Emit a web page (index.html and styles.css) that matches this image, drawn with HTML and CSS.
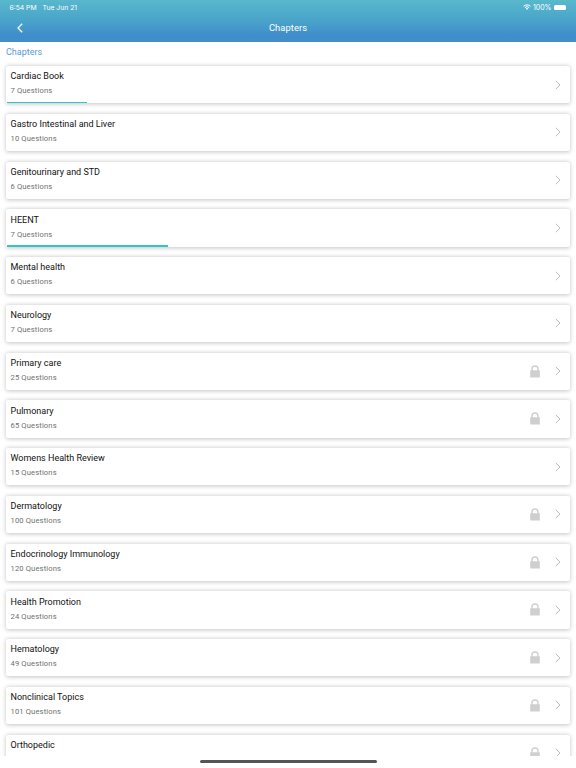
FILE: index.html
```html
<!DOCTYPE html>
<html lang="en">
<head>
    <meta charset="UTF-8">
    <meta name="viewport" content="width=device-width, initial-scale=1.0">
    <title>Chapters</title>
    <link rel="stylesheet" href="styles.css">
</head>
<body>
    <!-- Shared icons -->
    <svg class="icon-defs">
        <symbol id="chevron" viewBox="0 0 6 10">
            <path d="M0.8 0.9 L5 5 L0.8 9.1" fill="none" stroke="currentColor" stroke-width="0.9"/>
        </symbol>
        <symbol id="lock" viewBox="0 0 10 13">
            <path d="M2 6.5 V4 a3 3 0 0 1 6 0 V6.5" fill="none" stroke="currentColor" stroke-width="1.4"/>
            <rect x="0.2" y="5.2" width="9.6" height="7.4" rx="0.4" fill="currentColor"/>
        </symbol>
    </svg>

    <header class="header">
        <div class="status-bar">
            <span class="time">6:54 PM</span>
            <span class="date">Tue Jun 21</span>
            <svg class="wifi" viewBox="0 0 8 6">
                <path d="M0.5 2.3 a5 5 0 0 1 7 0 M1.8 3.7 a3.1 3.1 0 0 1 4.4 0" fill="none" stroke="#fff" stroke-width="1"/>
                <path d="M2.8 4.6 a1.7 1.7 0 0 1 2.4 0 L4 5.9 Z" fill="#fff"/>
            </svg>
            <span class="percent">100%</span>
            <span class="battery"></span>
        </div>
        <div class="nav-bar">
            <svg class="back" viewBox="0 0 6 10"><path d="M5.2 0.8 L1 5 L5.2 9.2" fill="none" stroke="#fff" stroke-width="1.3"/></svg>
            <h1>Chapters</h1>
        </div>
    </header>

    <h2 class="section-title">Chapters</h2>

    <main class="list">
        <div class="card">
            <div class="info"><h3>Cardiac Book</h3><p>7 Questions</p></div>
            <svg class="chevron"><use href="#chevron"/></svg>
            <div class="progress" style="width: 14.1%"></div>
        </div>
        <div class="card">
            <div class="info"><h3>Gastro Intestinal and Liver</h3><p>10 Questions</p></div>
            <svg class="chevron"><use href="#chevron"/></svg>
        </div>
        <div class="card">
            <div class="info"><h3>Genitourinary and STD</h3><p>6 Questions</p></div>
            <svg class="chevron"><use href="#chevron"/></svg>
        </div>
        <div class="card">
            <div class="info"><h3>HEENT</h3><p>7 Questions</p></div>
            <svg class="chevron"><use href="#chevron"/></svg>
            <div class="progress" style="width: 28.5%"></div>
        </div>
        <div class="card">
            <div class="info"><h3>Mental health</h3><p>6 Questions</p></div>
            <svg class="chevron"><use href="#chevron"/></svg>
        </div>
        <div class="card">
            <div class="info"><h3>Neurology</h3><p>7 Questions</p></div>
            <svg class="chevron"><use href="#chevron"/></svg>
        </div>
        <div class="card">
            <div class="info"><h3>Primary care</h3><p>25 Questions</p></div>
            <svg class="lock"><use href="#lock"/></svg>
            <svg class="chevron"><use href="#chevron"/></svg>
        </div>
        <div class="card">
            <div class="info"><h3>Pulmonary</h3><p>65 Questions</p></div>
            <svg class="lock"><use href="#lock"/></svg>
            <svg class="chevron"><use href="#chevron"/></svg>
        </div>
        <div class="card">
            <div class="info"><h3>Womens Health Review</h3><p>15 Questions</p></div>
            <svg class="chevron"><use href="#chevron"/></svg>
        </div>
        <div class="card">
            <div class="info"><h3>Dermatology</h3><p>100 Questions</p></div>
            <svg class="lock"><use href="#lock"/></svg>
            <svg class="chevron"><use href="#chevron"/></svg>
        </div>
        <div class="card">
            <div class="info"><h3>Endocrinology Immunology</h3><p>120 Questions</p></div>
            <svg class="lock"><use href="#lock"/></svg>
            <svg class="chevron"><use href="#chevron"/></svg>
        </div>
        <div class="card">
            <div class="info"><h3>Health Promotion</h3><p>24 Questions</p></div>
            <svg class="lock"><use href="#lock"/></svg>
            <svg class="chevron"><use href="#chevron"/></svg>
        </div>
        <div class="card">
            <div class="info"><h3>Hematology</h3><p>49 Questions</p></div>
            <svg class="lock"><use href="#lock"/></svg>
            <svg class="chevron"><use href="#chevron"/></svg>
        </div>
        <div class="card">
            <div class="info"><h3>Nonclinical Topics</h3><p>101 Questions</p></div>
            <svg class="lock"><use href="#lock"/></svg>
            <svg class="chevron"><use href="#chevron"/></svg>
        </div>
        <div class="card">
            <div class="info"><h3>Orthopedic</h3></div>
            <svg class="lock"><use href="#lock"/></svg>
            <svg class="chevron"><use href="#chevron"/></svg>
        </div>
    </main>

    <footer class="footer">
        <div class="home-indicator"></div>
    </footer>
</body>
</html>
```
FILE: styles.css
```css
* {
    margin: 0;
    padding: 0;
    box-sizing: border-box;
    font-family: Roboto, sans-serif;
}

body {
    background-color: #ffffff;
    height: 100vh;
    display: flex;
    flex-direction: column;
    overflow: hidden;
}

.icon-defs {
    display: none;
}

.header {
    height: 42px;
    flex: none;
    background: linear-gradient(#58b8cc, #49a3ca 50%, #3f8dca 85%, #428ecb);
    color: #ffffff;
}

.status-bar {
    display: flex;
    align-items: center;
    height: 14px;
    padding: 0 10.5px 0 9.5px;
    font-family: Inter, sans-serif;
    font-size: 7px;
}

.status-bar span {
    font-family: inherit;
}

.time,
.date {
    font-size: 6.8px;
}

.date {
    margin-left: 6px;
}

.wifi {
    width: 8px;
    height: 6px;
    margin-left: auto;
    margin-right: 2px;
}

.battery {
    width: 12px;
    height: 5px;
    margin-left: 2px;
    border-radius: 1.5px;
    background-color: #ffffff;
}

.nav-bar {
    display: grid;
    grid-template-columns: 40px 1fr 40px;
    align-items: center;
    height: 27px;
}

.back {
    width: 6px;
    height: 10px;
    margin-left: 17px;
}

.nav-bar h1 {
    font-size: 9.3px;
    font-weight: 400;
    letter-spacing: 0.1px;
    text-align: center;
}

.section-title {
    flex: none;
    height: 20px;
    padding: 0 6px;
    font-size: 9px;
    font-weight: 400;
    line-height: 20px;
    color: #559bd8;
}

.list {
    flex: 1;
    min-height: 0;
    overflow: hidden;
    display: flex;
    flex-direction: column;
    gap: 10.5px;
    padding: 4px 6px 0;
}

.card {
    position: relative;
    display: flex;
    align-items: center;
    flex: none;
    height: 37.25px;
    padding: 0 9.5px 0 4.5px;
    border-radius: 2px;
    background-color: #ffffff;
    box-shadow: 0 0.5px 4px rgba(0, 0, 0, 0.24);
}

.info {
    flex: 1;
    align-self: flex-start;
    padding-top: 4.25px;
}

.info h3 {
    font-size: 9px;
    font-weight: 400;
    line-height: 12px;
    color: #111111;
}

.info p {
    margin-top: 3px;
    font-size: 7.6px;
    letter-spacing: 0.14px;
    line-height: 11px;
    color: #707070;
}

.lock {
    width: 10px;
    height: 13px;
    margin-right: 14.5px;
    color: #cfcfcf;
}

.chevron {
    width: 6px;
    height: 10px;
    color: #b4b4b4;
}

/* Completed part of the chapter, along the bottom edge */
.progress {
    position: absolute;
    left: 1px;
    bottom: 0;
    height: 1.5px;
    background-color: #35c3cc;
}

.footer {
    display: flex;
    justify-content: center;
    flex: none;
    height: 12px;
    padding-top: 4px;
}

.home-indicator {
    width: 177px;
    height: 3px;
    border-radius: 2px;
    background-color: #555555;
}
```
